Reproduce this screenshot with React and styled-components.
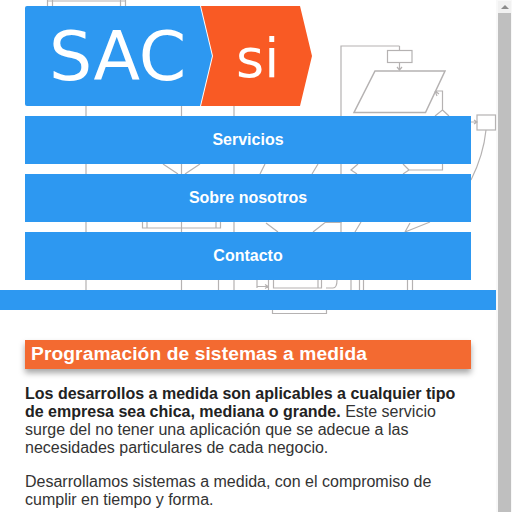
import React from 'react';
import styled, { createGlobalStyle } from 'styled-components';

const GlobalStyle = createGlobalStyle`
  html, body {
    margin: 0;
    height: 100%;
    overflow: hidden;
    background: #fff;
  }
  #root {
    height: 100%;
  }
`;

// Page and fake browser scrollbar
const Page = styled.div`
  display: flex;
  height: 512px;
  overflow: hidden;
  font-family: 'Liberation Sans', Arial, sans-serif;
`;

const Main = styled.main`
  width: 496px;
  flex: none;
`;

const Scrollbar = styled.div`
  flex: 1;
  display: flex;
  flex-direction: column;
  padding: 1px 1px 0 2px;
  background: #f8f8f8;
`;

const ScrollButton = styled.div`
  height: 12px;
  flex: none;
  display: flex;
  align-items: center;
  justify-content: center;
  background: #f1f1f1;

  &::before {
    content: '';
    border-left: 4px solid transparent;
    border-right: 4px solid transparent;
    border-bottom: 4px solid #8c8c8c;
  }
`;

const ScrollThumb = styled.div`
  flex: 1;
  background: #bfbfbf;
`;

// Header
const Header = styled.header`
  position: relative;
  height: 310px;
`;

const Diagram = styled.svg`
  position: absolute;
  top: 0;
  left: 0;
  width: 496px;
  height: 316px;
  overflow: visible;
`;

const HeaderInner = styled.div`
  position: relative;
  display: flex;
  flex-direction: column;
  gap: 10px;
  padding: 6px 25px 0;
`;

const Logo = styled.svg`
  display: block;
  width: 288px;
  height: 100px;
`;

const LogoText = styled.text`
  font-family: 'DejaVu Sans', sans-serif;
  fill: #fff;
`;

const Nav = styled.nav`
  display: flex;
  flex-direction: column;
  gap: 10px;
`;

const NavLink = styled.a`
  display: flex;
  align-items: center;
  justify-content: center;
  height: 48px;
  background: #2d98f1;
  color: #fff;
  font-size: 16px;
  font-weight: bold;
`;

const Band = styled.div`
  position: absolute;
  left: 0;
  bottom: 0;
  width: 100%;
  height: 20px;
  background: #2d98f1;
`;

// Content
const Content = styled.section`
  padding: 30px 25px 0;
`;

const Title = styled.h1`
  margin: 0 0 16px;
  height: 29px;
  padding: 0 6px;
  background: #f36a31;
  box-shadow: 0 4px 6px rgba(0, 0, 0, 0.35);
  color: #fff;
  font-size: 19.2px;
  font-weight: bold;
  line-height: 28px;
  letter-spacing: 0.1px;
`;

const Paragraph = styled.p`
  margin: 0 0 16px;
  color: #333;
  font-size: 16px;
  line-height: 18px;

  strong {
    color: #222;
  }
`;

const App = () => (
  <>
    <GlobalStyle />
    <Page>
      <Main>
        <Header>
          <Diagram viewBox="0 0 496 316" fill="none" stroke="#b5b2b2" strokeWidth="1.2">
            <path d="M47.5 0V6M52.5 0V6M120.5 0V6M125.5 0V6M47 1H126" />
            <path d="M86 106V290M181.5 106V290M234 106V290" />
            <path d="M399.5 46H341V174M341 174V232" />
            <rect x="387.5" y="50.5" width="24.5" height="12" />
            <path d="M399.5 46V50M399.5 62V70M397 67L399.5 70L402 67" />
            <path d="M375 71H445L425.5 112.5H354Z" strokeWidth="1.5" />
            <path d="M435 91H442.5V110L435 116M442.5 110L449 116M435 91L439 94M435 91L437 96" />
            <rect x="477" y="115" width="18.5" height="15" />
            <path d="M471 122H477M474 120L477 122L474 124" />
            <path d="M486 130C484 150 478 166 471 180" />
            <path d="M163 164L178 174M200 164L185 174M260 174L265 164M312 174L318 164" />
            <path d="M358 164L351 170L357 174M403 164L409 170L403 174M409 170H442.5V164" />
            <path d="M142.5 222V228H220.5V222M147 222V228M216 222V228" />
            <path d="M266 223L278 232M313 232L325 222.5H341.5M355 232L361 222M405 232L410 223M405 232L430 222" />
            <path d="M218.5 280V290M257 280V288M257 286.5H268M265 284.5L268 286.5L265 288.5M268.5 280V290" />
            <path d="M273.5 280V288H321.5V280M318 280V288M326 288H333Q337 288 337 280" />
            <path d="M351 280V290M359.5 280V290M363.5 280V290M407.5 280V290M412.5 280V290" />
            <path d="M272.5 310V313.5H326.5V310" />
          </Diagram>
          <HeaderInner>
            <Logo viewBox="0 0 288 100">
              <path d="M2 0H175L187 50L175 100H2Q0 100 0 98V2Q0 0 2 0Z" fill="#2d98f1" />
              <path d="M176 0H275L287 50L275 100H176L188 50Z" fill="#f95a24" />
              <LogoText x="24" y="74" fontSize="68">SAC</LogoText>
              <LogoText x="211" y="71" fontSize="54">si</LogoText>
            </Logo>
            <Nav>
              <NavLink>Servicios</NavLink>
              <NavLink>Sobre nosotros</NavLink>
              <NavLink>Contacto</NavLink>
            </Nav>
          </HeaderInner>
          <Band />
        </Header>
        <Content>
          <Title>Programación de sistemas a medida</Title>
          <Paragraph>
            <strong>
              Los desarrollos a medida son aplicables a cualquier tipo de empresa sea chica,
              mediana o grande.
            </strong>{' '}
            Este servicio surge del no tener una aplicación que se adecue a las necesidades
            particulares de cada negocio.
          </Paragraph>
          <Paragraph>
            Desarrollamos sistemas a medida, con el compromiso de cumplir en tiempo y forma.
          </Paragraph>
        </Content>
      </Main>
      <Scrollbar>
        <ScrollButton />
        <ScrollThumb />
      </Scrollbar>
    </Page>
  </>
);

export default App;
